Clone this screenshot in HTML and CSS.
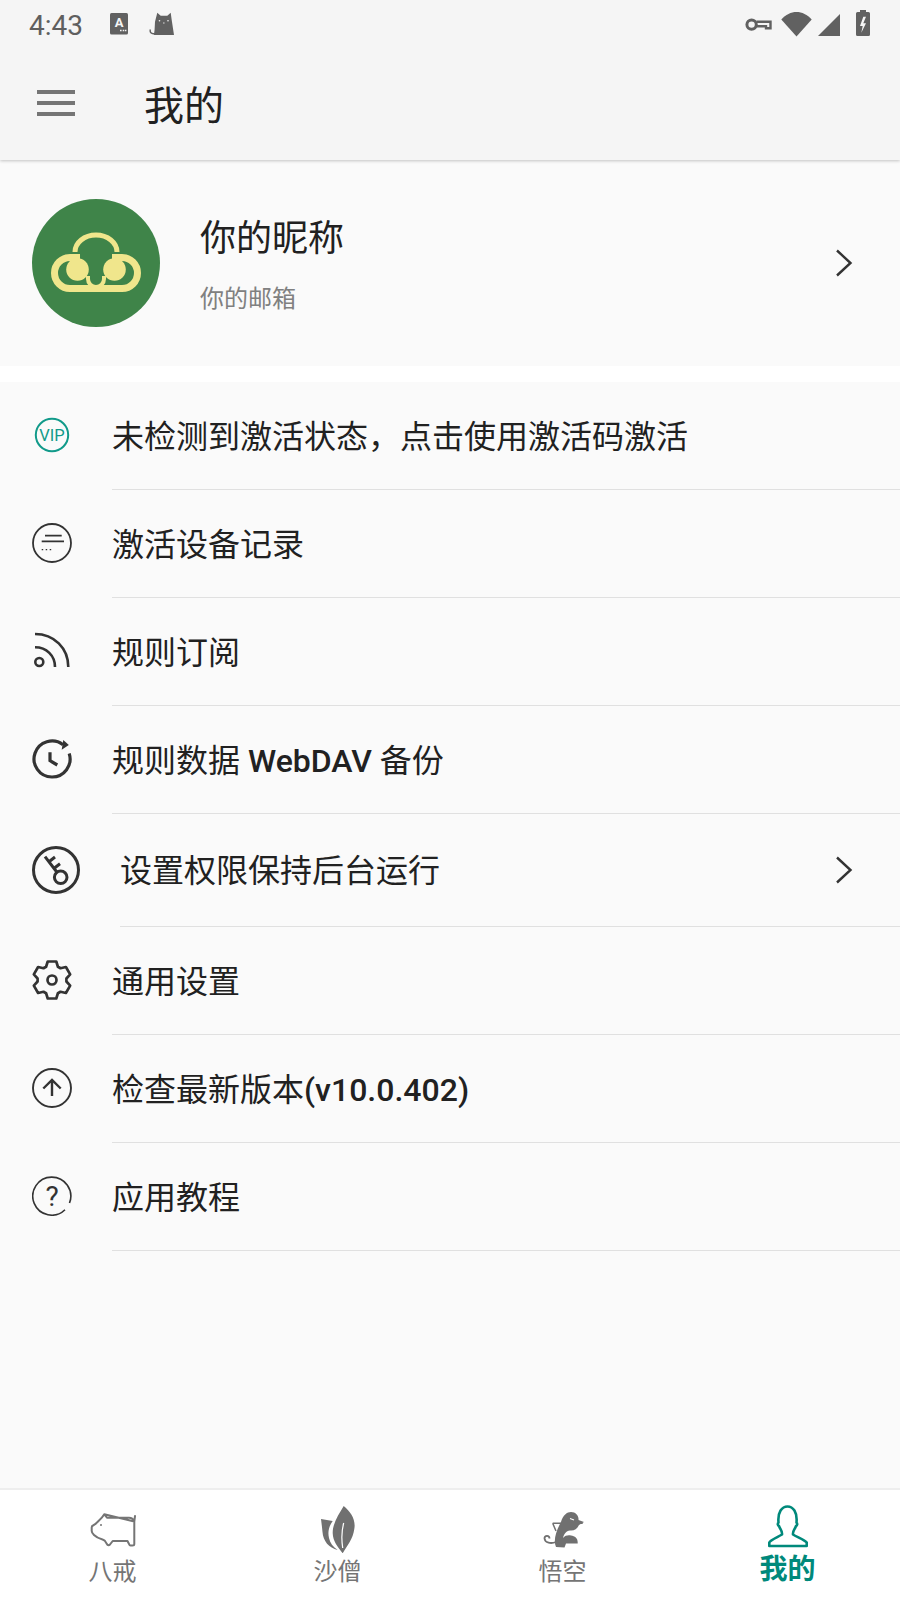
FILE: index.html
```html
<!DOCTYPE html>
<html lang="zh">
<head>
<meta charset="utf-8">
<title>我的</title>
<link rel="stylesheet" href="styles.css">
</head>
<body>
<div class="page">
  <header class="header">
    <div class="status">
      <span class="time">4:43</span>
      <svg class="st-a" width="18" height="22" viewBox="0 0 18 22"><rect width="18" height="21.5" rx="1.5" fill="#616161"/><text x="9" y="14" class="a-letter">A</text><path d="M10 17.5h1.6M12.7 17.5h1.6M15 17.5h1.4" stroke="#f5f5f5" stroke-width="1.5"/></svg>
      <svg class="st-cat" width="26" height="24" viewBox="0 0 26 24"><path d="M8.3 .7L11.7 3.7H18.3L21.7 .7L22.7 8L25 23H5L5.6 17.5L6 9.7Z" fill="#616161"/><path d="M6 21.5C2 22.5 .6 20 1.4 17.5" fill="none" stroke="#616161" stroke-width="1.4"/><circle cx="10.5" cy="8.7" r=".8" fill="#f5f5f5"/><circle cx="19" cy="8.7" r=".8" fill="#f5f5f5"/><path d="M14 11h1.6" stroke="#f5f5f5" stroke-width=".8"/></svg>
      <span class="st-space"></span>
      <svg class="st-key" width="27" height="14" viewBox="0 0 27 14" fill="none" stroke="#616161"><circle cx="6.6" cy="6.6" r="4.7" stroke-width="3"/><path d="M11.5 3.800H25.500V10.200H21V8.200H11.500" stroke-width="2.400"/></svg>
      <svg class="st-wifi" width="31" height="26" viewBox="0 0 31 26"><path d="M15.5 25.5L.3 8.4C9 -1.600 22 -1.600 30.700 8.4Z" fill="#616161"/></svg>
      <svg class="st-signal" width="22" height="22" viewBox="0 0 22 22"><path d="M0 22L22 0V22Z" fill="#616161"/></svg>
      <svg class="st-batt" width="14" height="26" viewBox="0 0 14 26"><path d="M4 0H10V2H12.500Q14 2 14 3.500V24.500Q14 26 12.500 26H1.500Q0 26 0 24.500V3.500Q0 2 1.500 2H4Z" fill="#616161"/><path d="M7.300 6.700L4 16H6.700L5.300 22.700L10 13.300H7.300L10 6.700Z" fill="#f5f5f5"/></svg>
    </div>
    <div class="toolbar">
      <span class="burger"><i></i><i></i><i></i></span>
      <h1 class="title">我的</h1>
    </div>
  </header>

  <section class="profile">
    <svg class="avatar" width="128" height="128" viewBox="0 0 128 128">
      <circle cx="64" cy="64" r="64" fill="#3f8449"/>
      <g fill="none" stroke="#f0e68c">
        <path d="M43 53A21 17 0 0 1 85 53" stroke-width="5"/>
        <path d="M48 58.500H38A15.500 15.500 0 0 0 38 89.500H90A15.500 15.500 0 0 0 90 58.500H80" stroke-width="7"/>
        <path d="M56 77V80A8 8 0 0 0 72 80V77" stroke-width="4"/>
      </g>
      <circle cx="45.500" cy="70.500" r="11.300" fill="#f0e68c"/>
      <circle cx="82.500" cy="70.500" r="11.300" fill="#f0e68c"/>
    </svg>
    <div class="profile-text">
      <div class="nick">你的昵称</div>
      <div class="mail">你的邮箱</div>
    </div>
    <svg class="chev" width="18" height="28" viewBox="0 0 18 28"><path d="M2 1.500L15.500 14L2 26.500" fill="none" stroke="#333" stroke-width="2.400"/></svg>
  </section>

  <main class="list">
    <div class="row">
      <span class="slot"><svg width="40" height="40" viewBox="0 0 40 40"><circle cx="20" cy="20" r="16.200" fill="none" stroke="#119a8a" stroke-width="2"/><text x="20" y="25.800" class="vip">VIP</text></svg></span>
      <div class="body">未检测到激活状态，点击使用激活码激活</div>
    </div>
    <div class="row">
      <span class="slot"><svg width="40" height="40" viewBox="0 0 40 40" fill="none" stroke="#333"><circle cx="20" cy="20" r="19" stroke-width="1.800"/><path d="M13 12.700H29.700M9.700 18.300H32" stroke-width="1.800"/><path d="M9.700 26.700H20" stroke-width="1.200" stroke-dasharray="1.500 2.500"/></svg></span>
      <div class="body">激活设备记录</div>
    </div>
    <div class="row">
      <span class="slot"><svg width="40" height="40" viewBox="0 0 40 40" fill="none" stroke="#333" stroke-width="2.600"><circle cx="7.300" cy="31" r="4"/><path d="M3 3C22 3 36.300 17 36.300 36"/><path d="M3 16.300C14.500 16.300 23 24.500 23 36"/></svg></span>
      <div class="body">规则订阅</div>
    </div>
    <div class="row">
      <span class="slot"><svg width="40" height="40" viewBox="0 0 40 40" fill="none" stroke="#333" stroke-width="3.200"><path d="M37.200 14.500A18 18 0 1 1 31 5.700"/><path d="M31.300 1L36.800 6L29.700 10.800Z" fill="#333" stroke="none"/><path d="M18 13.300V21.700L25.300 26"/></svg></span>
      <div class="body"><span>规则数据 <span class="latin">WebDAV</span> 备份</span></div>
    </div>
    <div class="row row-tall">
      <span class="slot slot-wide"><svg width="48" height="48" viewBox="0 0 48 48" fill="none" stroke="#333" stroke-width="3"><circle cx="24" cy="24" r="22.500"/><circle cx="28.700" cy="31.300" r="6.300"/><path d="M24.800 26L13 10.700M17.300 15.500L23 11M22.500 22L28 17.800"/></svg></span>
      <div class="body body-chev">设置权限保持后台运行<svg class="chev chev-row" width="18" height="28" viewBox="0 0 18 28"><path d="M2 1.500L15.500 14L2 26.500" fill="none" stroke="#333" stroke-width="2.400"/></svg></div>
    </div>
    <div class="row">
      <span class="slot"><svg width="40" height="40" viewBox="0 0 40 40" fill="none" stroke="#333" stroke-width="2.700" stroke-linejoin="round"><path d="M15.730 1.490H24.270L25.900 6.750L28.520 8.270L33.900 7.040L38.170 14.450L34.420 18.480V21.520L38.170 25.550L33.900 32.960L28.520 31.730L25.900 33.250L24.270 38.510H15.730L14.100 33.250L11.480 31.730L6.100 32.960L1.830 25.550L5.580 21.520V18.480L1.830 14.450L6.100 7.040L11.480 8.270L14.100 6.750Z"/><circle cx="20" cy="20" r="4.500"/></svg></span>
      <div class="body">通用设置</div>
    </div>
    <div class="row">
      <span class="slot"><svg width="40" height="40" viewBox="0 0 40 40" fill="none" stroke="#333" stroke-width="1.900"><circle cx="20" cy="20" r="19"/><path d="M20 12V28M11.300 20.500L20 12L28.700 20.500" stroke-width="2.400"/></svg></span>
      <div class="body"><span>检查最新版本<span class="latin">(v10.0.402)</span></span></div>
    </div>
    <div class="row">
      <span class="slot"><svg width="40" height="40" viewBox="0 0 40 40" fill="none" stroke="#333" stroke-width="1.600"><path d="M33 33.800A19 19 0 1 1 37.500 27"/><text x="20" y="30" class="help">?</text></svg></span>
      <div class="body">应用教程</div>
    </div>
  </main>

  <nav class="nav">
    <div class="tab">
      <svg width="48" height="48" viewBox="0 0 48 48" fill="none" stroke="#757575" stroke-width="2" stroke-linejoin="round" stroke-linecap="round"><path d="M15.300 9.300L18 12.700H40C43 12.700 44.500 14.500 45.300 16.500L46 11M45.300 16.500V39Q45.300 40.500 43.500 40.500H41.500Q40.500 40.500 40 39L38.500 36H23.700L21 39.500Q19.500 41 18.200 39.500L15.800 35.800Q15 35 13.500 34.500C10 33.500 7 32 5 30Q2.700 27.800 2.700 26V22.500Q2.700 21 4 20.500Q6 19.500 7.500 18C9.500 15.500 12.500 14 15.300 9.300Z"/><circle cx="12" cy="20" r="1" fill="#757575" stroke="none"/></svg>
      <span class="tab-label">八戒</span>
    </div>
    <div class="tab">
      <svg width="48" height="48" viewBox="0 0 48 48"><path d="M29.700 1C37 7 42 15 40.300 24C39 34 33 41 28.700 48.300C24 42 19 37 18.700 28.300C18.500 18 25 9 29.700 1Z" fill="#707070"/><path d="M7 14L18.700 16C15 21 13.500 27 15 33C16 38 19 42 23.700 45C15 43 9 36 8.500 27C8 22 7.500 18 7 14Z" fill="#707070"/><path d="M29.700 18C27.500 26 27.500 35 28.700 43" fill="none" stroke="#fff" stroke-width="1.200"/></svg>
      <span class="tab-label">沙僧</span>
    </div>
    <div class="tab">
      <svg width="48" height="48" viewBox="0 0 48 48"><path d="M22 17C24 10 28 7 32 7C37 7 40 11 39.500 15L45 17L40 20C38 24 35 26 31 25.500C27 26 25 29 24 33C26 30.500 29 30 32 30.500C36 31 39 33 38.700 38.500L27 38.500L25.500 42.500L17 42C14.500 36 16 28 22 17Z" fill="#707070"/><path d="M13.700 18.300H43.700M13.700 18.300L17 26" fill="none" stroke="#707070" stroke-width="1.500"/><path d="M17 37C12 39 6 38 5.500 33.500C5.500 30 10.500 30 10.500 33.500" fill="none" stroke="#707070" stroke-width="1.800"/><path d="M31 13.500L35 15" stroke="#fff" stroke-width="1.200"/></svg>
      <span class="tab-label">悟空</span>
    </div>
    <div class="tab tab-on">
      <svg width="48" height="48" viewBox="0 0 48 48" fill="none" stroke="#00897b" stroke-width="2.600" stroke-linejoin="round"><path d="M5.300 41V37.500C6 35 14 32 18 29.500C18.500 26 16.500 25 15 21C13.500 20.500 13.500 18.500 14.500 17.500C13.500 7 18 1.500 23.500 1.500C29 1.500 33.500 7 32.500 17.500C33.500 18.500 33.500 20.500 32 21C30.500 25 28.500 26 29 29.500C33 32 41 35 42.700 37.500V41Z"/></svg>
      <span class="tab-label">我的</span>
    </div>
  </nav>
</div>
</body>
</html>
```

FILE: styles.css
```css
* { box-sizing: border-box; }
html, body { margin: 0; padding: 0; }
body {
  width: 900px;
  height: 1600px;
  overflow: hidden;
  background: #fff;
  font-family: Roboto, "Noto Sans CJK SC", sans-serif;
  color: #212121;
}
svg { display: block; flex: none; }
.page { display: flex; flex-direction: column; height: 1600px; }

.header {
  height: 160px;
  flex: none;
  background: #f5f5f5;
  box-shadow: 0 1px 3px rgba(0, 0, 0, .22);
  position: relative;
}
.status { height: 48px; display: flex; align-items: center; padding: 0 30px 0 29px; }
.time { font-size: 28px; color: #5f5f5f; width: 81px; padding-top: 2px; }
.st-cat { margin-left: 21px; }
.st-space { flex: 1; }
.st-key { margin-top: 1px; }
.st-wifi { margin-left: 9px; margin-top: -1px; }
.st-signal { margin-left: 6px; margin-top: 2px; }
.st-batt { margin-left: 16px; margin-top: -2px; }
.a-letter { font: 700 13px Roboto, sans-serif; fill: #f5f5f5; text-anchor: middle; }

.toolbar { height: 112px; display: flex; align-items: center; padding-left: 37px; }
.burger { display: flex; flex-direction: column; gap: 7px; width: 38px; margin-top: -2px; }
.burger i { display: block; height: 4px; background: #757575; }
.title { margin: 6px 0 0 69px; font-size: 40px; font-weight: 400; line-height: 50px; color: #212121; }

.profile {
  height: 206px;
  flex: none;
  background: #fafafa;
  display: flex;
  align-items: center;
  padding: 0 47px 0 32px;
}
.profile-text { flex: 1; margin-left: 40px; display: flex; flex-direction: column; padding-top: 4px; }
.nick { font-size: 36px; line-height: 48px; color: #212121; }
.mail { font-size: 24px; line-height: 34px; margin-top: 19px; color: #808080; }

.list { flex: 1; margin-top: 16px; background: #fafafa; }
.row { height: 108px; display: flex; align-items: stretch; }
.row-tall { height: 113px; }
.slot { width: 112px; flex: none; display: flex; align-items: center; padding: 0 0 2px 32px; }
.slot-wide { width: 120px; }
.body {
  flex: 1;
  display: flex;
  align-items: center;
  font-size: 32px;
  border-bottom: 1px solid #e0e0e0;
  padding: 0 47px 4px 0;
  color: #212121;
}
.latin { font-weight: 500; }
.body-chev { justify-content: space-between; }
.chev-row { margin-top: 4px; }
.vip { font: 400 16.500px Roboto, sans-serif; fill: #119a8a; stroke: none; text-anchor: middle; }
.help { font: 400 28px Roboto, sans-serif; fill: #333; stroke: none; text-anchor: middle; }

.nav {
  height: 112px;
  flex: none;
  background: #fff;
  border-top: 2px solid #eeeeee;
  display: grid;
  grid-template-columns: repeat(4, 1fr);
}
.tab { display: flex; flex-direction: column; align-items: center; padding-top: 15px; }
.tab-label { font-size: 24px; line-height: 30px; margin-top: 4px; color: #757575; }
.tab-on .tab-label { font-size: 28px; font-weight: 700; line-height: 24px; margin-top: 5px; color: #00897b; }
```
